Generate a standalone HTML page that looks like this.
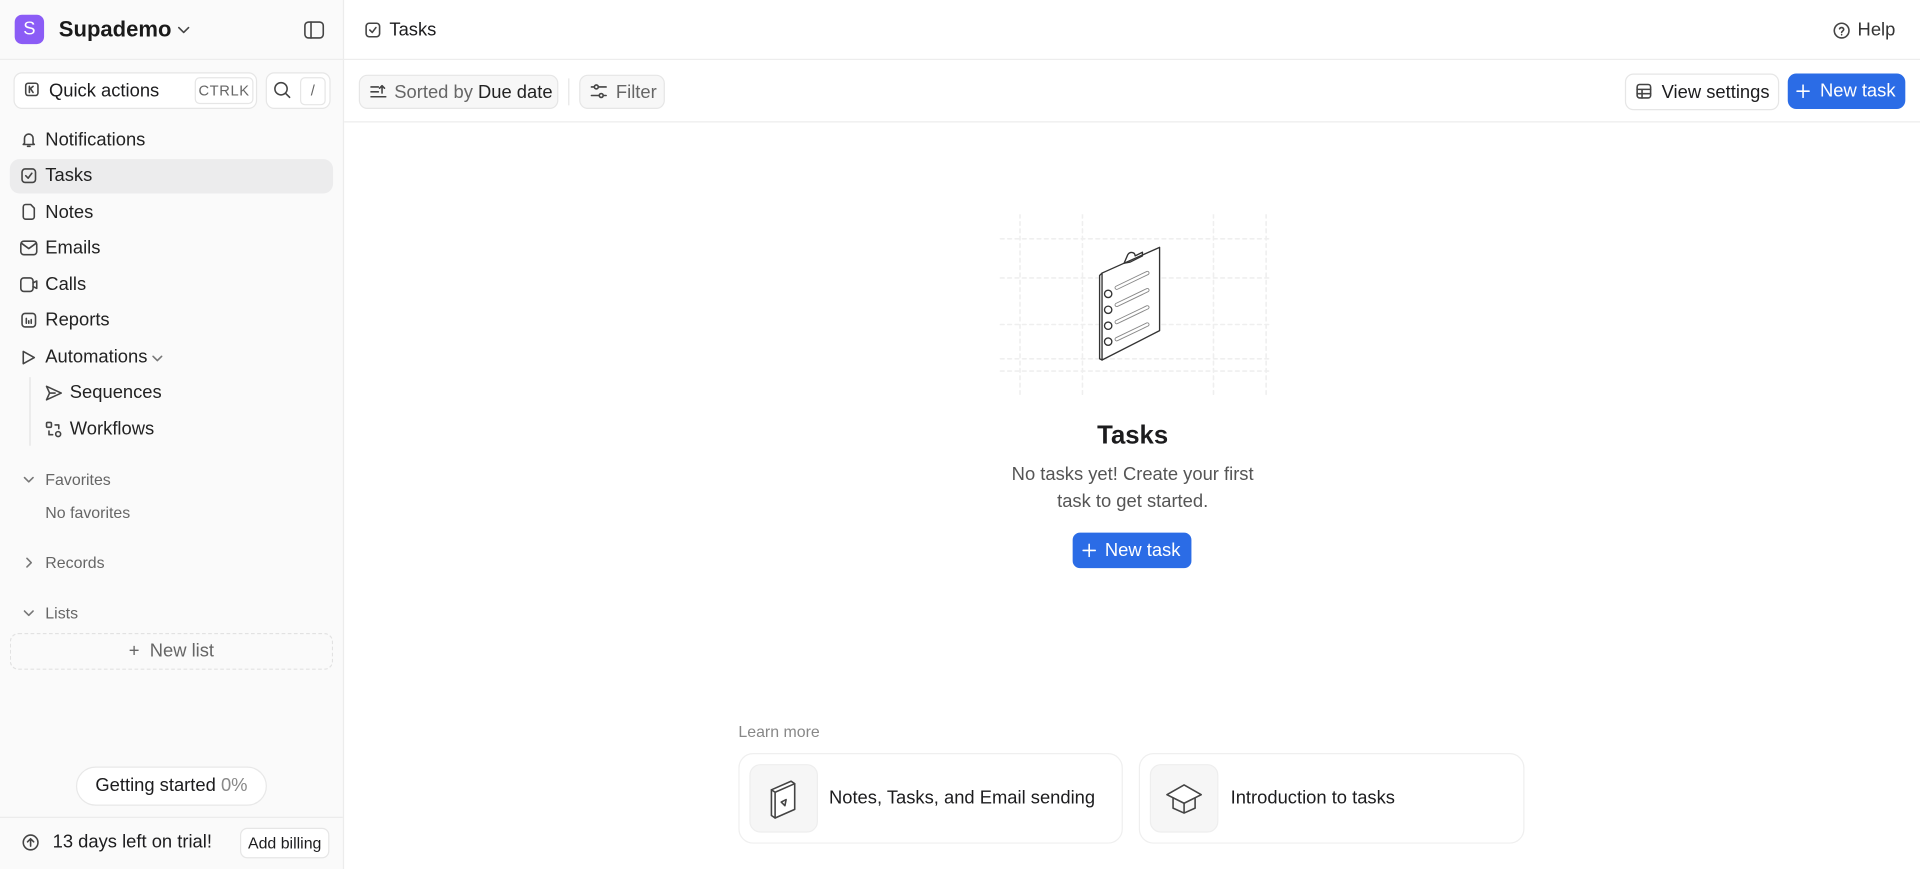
<!DOCTYPE html>
<html><head><meta charset="utf-8"><style>
html,body{margin:0;padding:0;width:1920px;height:869px;overflow:hidden;background:#fff}
#w{width:1568px;height:710px;transform:scale(1.22449);transform-origin:0 0;position:relative;font-family:"Liberation Sans",sans-serif;color:#1c1c1e}
.a{position:absolute}
.sb{left:0;top:0;width:280px;height:710px;background:#fafafa;border-right:1px solid #ececec}
.nav{position:absolute;left:37px;font-size:15px;line-height:20px;color:#222}
.sec{position:absolute;left:37px;font-size:13px;color:#666}
.btn{position:absolute;border:1px solid #e6e6e6;border-radius:7px;background:#fff;font-size:15px;box-sizing:border-box;display:flex;align-items:center}
svg{stroke:#444;fill:none;stroke-width:1.3;stroke-linecap:round;stroke-linejoin:round}
</style></head><body><div id="w">
<div class="a sb"></div>
<div class="a" style="left:0;top:48px;width:1568px;height:1px;background:#ededed"></div>
<div class="a" style="left:281px;top:99px;width:1287px;height:1px;background:#ededed"></div>
<div class="a" style="left:12px;top:12px;width:24px;height:24px;border-radius:6px;background:#8b5cf6;color:#fff;font-size:15px;text-align:center;line-height:24px">S</div>
<div class="a" style="left:48px;top:14px;font-size:18px;font-weight:bold;color:#1a1a1a">Supademo</div>
<svg class="a" style="left:145px;top:21px" width="10" height="7"><path d="M1 1.5l4 4 4-4"/></svg>
<svg class="a" style="left:248px;top:17px" width="17" height="15"><rect x="1" y="1" width="15" height="13" rx="3"/><line x1="6" y1="1" x2="6" y2="14"/></svg>
<div class="btn" style="left:11px;top:59px;width:199px;height:30px;padding-left:28px">Quick actions</div>
<svg class="a" style="left:20px;top:67px" width="12" height="12"><rect x="1" y="1" width="10" height="10" rx="2"/><path d="M4 3.5v5M4 6l3-2.5M5 5.5l2 3"/></svg>
<div class="a" style="left:159px;top:63px;width:46px;height:20px;border:1px solid #e6e6e6;border-radius:4px;font-size:12px;color:#666;text-align:center;line-height:20px;letter-spacing:.5px">CTRLK</div>
<div class="btn" style="left:217px;top:59px;width:53px;height:30px"></div>
<svg class="a" style="left:223px;top:66px" width="15" height="15"><circle cx="6.5" cy="6.5" r="5"/><line x1="10.5" y1="10.5" x2="13.5" y2="13.5"/></svg>
<div class="a" style="left:245px;top:63px;width:19px;height:21px;border:1px solid #e6e6e6;border-radius:4px;font-size:12px;color:#666;text-align:center;line-height:21px">/</div>
<div class="a" style="left:8px;top:130px;width:264px;height:28px;background:#ececed;border-radius:8px"></div>
<svg class="a" style="left:17px;top:107px" width="13" height="14"><path d="M3 10V6a3.5 3.5 0 017 0v4l1 1H2zM5.5 12.5h2"/></svg><div class="nav" style="top:105px">Notifications</div>
<svg class="a" style="left:17px;top:137px" width="13" height="13"><rect x="1" y="1" width="11" height="11" rx="2.5"/><path d="M4 6.5l2 2 3-4"/></svg><div class="nav" style="top:134px">Tasks</div>
<svg class="a" style="left:17px;top:166px" width="13" height="14"><path d="M2 3a2 2 0 012-2h4l3 3v7a2 2 0 01-2 2H4a2 2 0 01-2-2z"/></svg><div class="nav" style="top:164px">Notes</div>
<svg class="a" style="left:16px;top:196px" width="15" height="13"><rect x="1" y="1" width="13" height="11" rx="2.5"/><path d="M2 3l5.5 4L13 3"/></svg><div class="nav" style="top:193px">Emails</div>
<svg class="a" style="left:16px;top:226px" width="16" height="13"><rect x="1" y="1" width="10" height="11" rx="2.5"/><path d="M11 5l3-1.5v6L11 8"/></svg><div class="nav" style="top:223px">Calls</div>
<svg class="a" style="left:17px;top:255px" width="13" height="13"><rect x="1" y="1" width="11" height="11" rx="2.5"/><path d="M4.5 5v4M6.5 7v2M8.5 6v3"/></svg><div class="nav" style="top:252px">Reports</div>
<svg class="a" style="left:17px;top:285px" width="13" height="14"><path d="M2 2l9 5-9 5z"/></svg><div class="nav" style="top:282px">Automations</div>
<svg class="a" style="left:124px;top:290px;stroke:#777" width="9" height="6"><path d="M1 1l3.5 3.5L8 1"/></svg>
<div class="a" style="left:24px;top:308px;width:1px;height:56px;background:#e3e3e3"></div>
<svg class="a" style="left:37px;top:314px" width="14" height="14"><path d="M1 1.5l12 5.5-12 5.5 2.5-5.5zM3.5 7H8"/></svg><div class="nav" style="left:57px;top:311px">Sequences</div>
<svg class="a" style="left:37px;top:344px" width="14" height="14"><rect x="1" y="1" width="4" height="4" rx="1"/><circle cx="10.5" cy="10.5" r="2"/><path d="M8 3h3v3M3 8v3h3"/></svg><div class="nav" style="left:57px;top:341px">Workflows</div>
<svg class="a" style="left:19px;top:389px;stroke:#777" width="9" height="6"><path d="M1 1l3.5 3.5L8 1"/></svg><div class="sec" style="top:384px">Favorites</div>
<div class="sec" style="top:411px">No favorites</div>
<svg class="a" style="left:21px;top:455px;stroke:#777" width="6" height="9"><path d="M1 1l3.5 3.5L1 8"/></svg><div class="sec" style="top:452px">Records</div>
<svg class="a" style="left:19px;top:498px;stroke:#777" width="9" height="6"><path d="M1 1l3.5 3.5L8 1"/></svg><div class="sec" style="top:493px">Lists</div>
<div class="a" style="left:8px;top:517px;width:264px;height:30px;border:1px dashed #e2e2e2;border-radius:7px;box-sizing:border-box;text-align:center;line-height:28px;font-size:15px;color:#666">+&nbsp; New list</div>
<div class="a" style="left:62px;top:626px;width:156px;height:32px;border:1px solid #e8e8e8;border-radius:16px;background:#fff;box-sizing:border-box;text-align:center;line-height:30px;font-size:15px">Getting started <span style="color:#888">0%</span></div>
<div class="a" style="left:0;top:667px;width:280px;height:1px;background:#ececec"></div>
<svg class="a" style="left:18px;top:681px" width="14" height="14"><circle cx="7" cy="7" r="6"/><path d="M7 10V4M4.5 6.5L7 4l2.5 2.5"/></svg>
<div class="a" style="left:43px;top:679px;font-size:15px">13 days left on trial!</div>
<div class="a" style="left:196px;top:676px;width:73px;height:25px;border:1px solid #e6e6e6;border-radius:6px;background:#fff;box-sizing:border-box;text-align:center;line-height:23px;font-size:13px">Add billing</div>
<svg class="a" style="left:298px;top:18px" width="13" height="13"><rect x="1" y="1" width="11" height="11" rx="2.5"/><path d="M4 6.5l2 2 3-4"/></svg>
<div class="a" style="left:318px;top:16px;font-size:15px">Tasks</div>
<svg class="a" style="left:1497px;top:18px" width="14" height="14"><circle cx="7" cy="7" r="6"/><path d="M5.3 5.5a1.8 1.8 0 013.4.6c0 1.2-1.7 1.4-1.7 2.4M7 10.3v.1"/></svg>
<div class="a" style="left:1517px;top:16px;font-size:15px;color:#333">Help</div>
<div class="btn" style="left:293px;top:61px;width:163px;height:28px;background:#f7f7f7;padding-left:28px;color:#666">Sorted by&nbsp;<span style="color:#222">Due date</span></div>
<svg class="a" style="left:302px;top:68px" width="14" height="13"><path d="M1 3h6M1 7h6M1 11h12M10 8V2M8 4l2-2 2 2"/></svg>
<div class="a" style="left:464px;top:64px;width:1px;height:22px;background:#e6e6e6"></div>
<div class="btn" style="left:473px;top:61px;width:70px;height:28px;background:#f7f7f7;padding-left:29px;color:#666">Filter</div>
<svg class="a" style="left:482px;top:68px" width="14" height="13"><path d="M1 3h12M1 10h12"/><circle cx="5" cy="3" r="1.6" fill="#f7f7f7"/><circle cx="9" cy="10" r="1.6" fill="#f7f7f7"/></svg>
<div class="btn" style="left:1327px;top:60px;width:126px;height:30px;padding-left:29px">View settings</div>
<svg class="a" style="left:1336px;top:68px" width="13" height="13"><rect x="1" y="1" width="11" height="11" rx="2"/><path d="M1 5h11M1 8.5h11M5 5v7"/></svg>
<div class="a" style="left:1460px;top:60px;width:96px;height:29px;background:#2b6ce6;border-radius:7px;color:#fff;font-size:15px;line-height:29px;text-align:right;padding-right:8px;box-sizing:border-box">New task</div>
<svg class="a" style="left:1467px;top:69px;stroke:#fff" width="11" height="11"><path d="M5.5 0.5v10M0.5 5.5h10"/></svg>
<svg class="a" style="left:814px;top:175px;stroke:#efefef;stroke-dasharray:3 3" width="225" height="148"><path d="M3 20h220M3 52h220M3 90h220M3 118h220M3 128h220M19 0v148M70 0v148M177 0v148M220 0v148"/></svg>
<svg class="a" style="left:890px;top:198px;stroke:#333;stroke-width:1.1" width="70" height="100"><path d="M10 25l47-21v68L10 96z" fill="#fff"/><path d="M10 25l-2 2v68l2 1"/><path d="M28 17l3-7c2-3 6-2 6 1l6-3v3l-10 5z"/><path d="M22 37l25-12M22 51l25-12M22 65l25-12M22 79l25-12" stroke="#888" stroke-width="3.5"/><path d="M22 37l25-12M22 51l25-12M22 65l25-12M22 79l25-12" stroke="#fff" stroke-width="2"/><circle cx="15" cy="42" r="3"/><circle cx="15" cy="55" r="3"/><circle cx="15" cy="68" r="3"/><circle cx="15" cy="81" r="3"/></svg>
<div class="a" style="left:825px;top:344px;width:200px;text-align:center;font-size:21px;font-weight:bold">Tasks</div>
<div class="a" style="left:815px;top:377px;width:220px;text-align:center;font-size:15px;line-height:22px;color:#555">No tasks yet! Create your first<br>task to get started.</div>
<div class="a" style="left:876px;top:435px;width:97px;height:29px;background:#2b6ce6;border-radius:6px;color:#fff;font-size:15px;line-height:29px;text-align:right;padding-right:9px;box-sizing:border-box">New task</div>
<svg class="a" style="left:884px;top:444px;stroke:#fff" width="11" height="11"><path d="M5.5 0.5v10M0.5 5.5h10"/></svg>
<div class="a" style="left:603px;top:590px;font-size:13px;color:#888">Learn more</div>
<div class="a" style="left:603px;top:615px;width:314px;height:74px;border:1px solid #efefef;border-radius:12px;box-sizing:border-box"></div>
<div class="a" style="left:612px;top:624px;width:56px;height:56px;background:#f6f6f6;border:1px solid #eee;border-radius:9px;box-sizing:border-box"></div>
<svg class="a" style="left:626px;top:636px" width="28" height="34"><path d="M4 9l16-7 3 2v21L7 32 4 30z" fill="#fff"/><path d="M4 9l3 2 16-7M7 11v21"/><path d="M12 19l4-2-1 5z"/></svg>
<div class="a" style="left:677px;top:643px;font-size:15px">Notes, Tasks, and Email sending</div>
<div class="a" style="left:930px;top:615px;width:315px;height:74px;border:1px solid #efefef;border-radius:12px;box-sizing:border-box"></div>
<div class="a" style="left:939px;top:624px;width:56px;height:56px;background:#f6f6f6;border:1px solid #eee;border-radius:9px;box-sizing:border-box"></div>
<svg class="a" style="left:951px;top:638px" width="32" height="28"><path d="M2 11l14-8 14 8-14 7z" fill="#fff"/><path d="M7 14v8l9 4 9-4v-8M16 18v8"/></svg>
<div class="a" style="left:1005px;top:643px;font-size:15px">Introduction to tasks</div>
</div></body></html>
